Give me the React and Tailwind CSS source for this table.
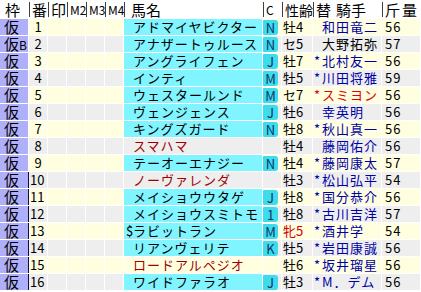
const rows = [
  { w: "", n: 1, pre: "", name: "アドマイヤビクター", c: "N", sa: "牡4", mark: "", jk: "和田竜二", jc: "text-[#0000a8]", kg: 56 },
  { w: "B", n: 2, pre: "", name: "アナザートゥルース", c: "N", sa: "セ5", mark: "", jk: "大野拓弥", jc: "text-black", kg: 57 },
  { w: "", n: 3, pre: "", name: "アングライフェン", c: "J", sa: "牡7", mark: "*", jk: "北村友一", jc: "text-[#0000a8]", kg: 56 },
  { w: "", n: 4, pre: "", name: "インティ", c: "M", sa: "牡5", mark: "*", jk: "川田将雅", jc: "text-[#0000a8]", kg: 59 },
  { w: "", n: 5, pre: "", name: "ウェスタールンド", c: "M", sa: "セ7", mark: "*", jk: "スミヨン", jc: "text-[#e00000]", kg: 56 },
  { w: "", n: 6, pre: "", name: "ヴェンジェンス", c: "J", sa: "牡6", mark: "", jk: "幸英明", jc: "text-[#0000a8]", kg: 56 },
  { w: "", n: 7, pre: "", name: "キングズガード", c: "N", sa: "牡8", mark: "*", jk: "秋山真一", jc: "text-[#0000a8]", kg: 56 },
  { w: "", n: 8, pre: "", name: "スマハマ", red: true, c: "", sa: "牡4", mark: "", jk: "藤岡佑介", jc: "text-[#0000a8]", kg: 56 },
  { w: "", n: 9, pre: "", name: "テーオーエナジー", c: "N", sa: "牡4", mark: "*", jk: "藤岡康太", jc: "text-[#0000a8]", kg: 57 },
  { w: "", n: 10, pre: "", name: "ノーヴァレンダ", red: true, c: "", sa: "牡3", mark: "*", jk: "松山弘平", jc: "text-[#0000a8]", kg: 54 },
  { w: "", n: 11, pre: "", name: "メイショウウタゲ", c: "J", sa: "牡8", mark: "*", jk: "国分恭介", jc: "text-[#0000a8]", kg: 56 },
  { w: "", n: 12, pre: "", name: "メイショウスミトモ", c: "1", sa: "牡8", mark: "*", jk: "古川吉洋", jc: "text-[#0000a8]", kg: 57 },
  { w: "", n: 13, pre: "$", name: "ラビットラン", c: "M", sa: "牝5", saRed: true, mark: "*", jk: "酒井学", jc: "text-[#0000a8]", kg: 54 },
  { w: "", n: 14, pre: "", name: "リアンヴェリテ", c: "K", sa: "牡5", mark: "*", jk: "岩田康誠", jc: "text-[#0000a8]", kg: 56 },
  { w: "", n: 15, pre: "", name: "ロードアルペジオ", red: true, c: "", sa: "牡6", mark: "*", jk: "坂井瑠星", jc: "text-[#0000a8]", kg: 56 },
  { w: "", n: 16, pre: "", name: "ワイドファラオ", c: "J", sa: "牡3", mark: "*", jk: "M．デム", jc: "text-[#0000a8]", kg: 56 },
];

const cols = "grid grid-cols-[29px_19px_19px_19px_19px_19px_139px_19px_31px_69px_1fr]";

const Head = ({ children, first, className = "" }) => (
  <div className={`h-[19px] flex items-center ${className}`}>
    {!first && <span className="w-px h-[15px] bg-[#404040] mr-[2px] shrink-0" />}
    <span className="leading-[16px] whitespace-nowrap">{children}</span>
  </div>
);

export default function App() {
  return (
    <div
      className="w-[421px] h-[292px] bg-white overflow-hidden text-[13px] text-black"
      style={{ fontFamily: '"Noto Sans CJK JP", "Noto Sans", sans-serif' }}
    >
      {/* header */}
      <div className={`${cols} text-[15px]`}>
        <Head first className="pl-[5px]">枠</Head>
        <Head>番</Head>
        <Head>印</Head>
        <Head className="text-[12px]">M2</Head>
        <Head className="text-[12px]">M3</Head>
        <Head className="text-[12px]">M4</Head>
        <Head>
          <span className="pl-[4px]">馬名</span>
        </Head>
        <Head className="text-[12px]">C</Head>
        <Head className="text-[14px]">性齢</Head>
        <Head>
          替<span className="pl-[5px]">騎手</span>
        </Head>
        <Head className="tracking-[2px]">斤量</Head>
      </div>

      {/* body */}
      {rows.map((r, i) => {
        const bg = i % 2 === 0 ? "bg-[#ffffe0]" : "bg-[#eeeeee]";
        const cell = "h-[16px] mr-px leading-[16px] whitespace-nowrap";
        return (
          <div key={r.n} className={`${cols} h-[17px] border-b border-white tracking-[1px]`}>
            <div className={`${cell} bg-[#b0b0fa] pl-[4px] text-[15px] tracking-normal flex items-baseline`}>
              仮{r.w && <span className="text-[12px] leading-[16px]">{r.w}</span>}
            </div>
            <div
              className={`${cell} ${bg} ${
                r.n >= 10 ? "border-l border-[#101040] pl-[1px] -ml-px" : "text-center"
              } tracking-normal`}
            >
              {r.n}
            </div>
            <div className={`${cell} ${bg}`} />
            <div className={`${cell} ${bg}`} />
            <div className={`${cell} ${bg}`} />
            <div className={`${cell} ${bg}`} />
            <div className={`${cell} ${r.red ? bg + " text-[#a00000]" : "bg-[#80f4ff]"} flex`}>
              <span className="inline-block w-[9px] pl-[2px] tracking-normal shrink-0">{r.pre}</span>
              <span>{r.name}</span>
            </div>
            <div className={`${cell} ${bg} flex items-center`}>
              {r.c && (
                <span className="w-[15px] h-[15px] bg-[#3cdcec] rounded-r-[3px] rounded-l-[1px] flex items-center justify-center text-[13px] text-[#10306a] tracking-normal leading-none">
                  {r.c}
                </span>
              )}
            </div>
            <div className={`${cell} ${bg} pl-[1px] ${r.saRed ? "text-[#d00000]" : ""} tracking-normal`}>
              {r.sa}
            </div>
            <div className={`${cell} ${bg} ${r.jc} flex`}>
              <span className="inline-block w-[9px] pl-[1px] tracking-normal shrink-0">{r.mark}</span>
              <span>{r.jk}</span>
            </div>
            <div className={`${cell} ${bg} pl-[3px] mr-0`}>{r.kg}</div>
          </div>
        );
      })}
    </div>
  );
}
